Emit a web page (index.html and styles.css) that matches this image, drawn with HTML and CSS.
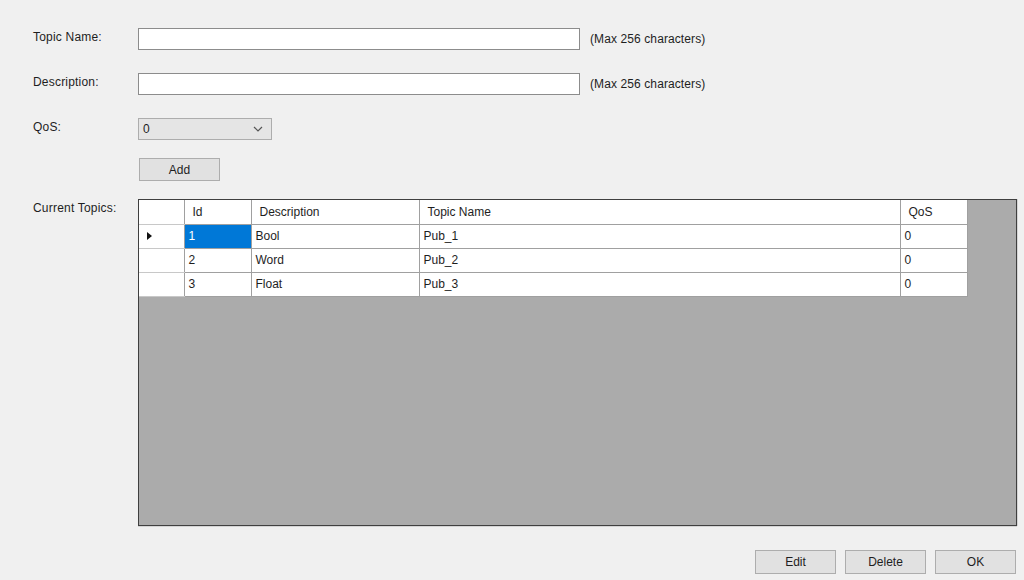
FILE: index.html
```html
<!DOCTYPE html>
<html lang="en">
<head>
    <meta charset="UTF-8">
    <meta name="viewport" content="width=device-width, initial-scale=1.0">
    <title>Topics</title>
    <link rel="stylesheet" href="styles.css">
</head>
<body>
    <div class="form">
        <div class="row row-text">
            <label class="label">Topic Name:</label>
            <input type="text" class="textbox">
            <span class="hint">(Max 256 characters)</span>
        </div>
        <div class="row row-text">
            <label class="label">Description:</label>
            <input type="text" class="textbox">
            <span class="hint">(Max 256 characters)</span>
        </div>
        <div class="row row-combo">
            <label class="label">QoS:</label>
            <div class="combo">
                <span>0</span>
                <svg class="chevron" width="10" height="6" viewBox="0 0 10 6"><path d="M1 1 L5 5 L9 1" fill="none" stroke="#555" stroke-width="1.2"/></svg>
            </div>
        </div>
        <div class="row row-add">
            <span class="label"></span>
            <button class="btn btn-add">Add</button>
        </div>
        <div class="row row-grid">
            <label class="label">Current Topics:</label>
            <div class="grid">
                <table class="topics">
                    <colgroup>
                        <col class="c-head">
                        <col class="c-id">
                        <col class="c-desc">
                        <col class="c-name">
                        <col class="c-qos">
                    </colgroup>
                    <thead>
                        <tr>
                            <th class="rowhead"></th>
                            <th>Id</th>
                            <th>Description</th>
                            <th>Topic Name</th>
                            <th>QoS</th>
                        </tr>
                    </thead>
                    <tbody>
                        <tr>
                            <td class="rowhead"><span class="arrow"></span></td>
                            <td class="selected">1</td>
                            <td>Bool</td>
                            <td>Pub_1</td>
                            <td>0</td>
                        </tr>
                        <tr>
                            <td class="rowhead"></td>
                            <td>2</td>
                            <td>Word</td>
                            <td>Pub_2</td>
                            <td>0</td>
                        </tr>
                        <tr>
                            <td class="rowhead"></td>
                            <td>3</td>
                            <td>Float</td>
                            <td>Pub_3</td>
                            <td>0</td>
                        </tr>
                    </tbody>
                </table>
            </div>
        </div>
    </div>
    <div class="actions">
        <button class="btn">Edit</button>
        <button class="btn">Delete</button>
        <button class="btn">OK</button>
    </div>
</body>
</html>
```

FILE: styles.css
```css
* {
    margin: 0;
    padding: 0;
    box-sizing: border-box;
}

body {
    font-family: "Liberation Sans", Arial, sans-serif;
    font-size: 12px;
    color: #1e1e1e;
    background-color: #f0f0f0;
    width: 1024px;
    height: 580px;
    overflow: hidden;
}

.form {
    padding: 28px 0 0 33px;
}

.row {
    display: flex;
    align-items: flex-start;
}

.label {
    width: 105px;
    flex-shrink: 0;
    padding-top: 2px;
    letter-spacing: 0.2px;
}

.row-text + .row-text {
    margin-top: 23px;
}

.row-combo {
    margin-top: 23px;
}

.row-add {
    margin-top: 18px;
}

.row-grid {
    margin-top: 18px;
}

.textbox {
    width: 442px;
    height: 22px;
    border: 1px solid #8c8c8c;
    background: #fff;
    font: inherit;
    outline: none;
}

.hint {
    margin-left: 10px;
    line-height: 22px;
    letter-spacing: 0.1px;
}

.combo {
    width: 134px;
    height: 22px;
    border: 1px solid #adadad;
    background: #e5e5e5;
    display: flex;
    align-items: center;
    justify-content: space-between;
    padding: 0 8px 0 4px;
}

.btn {
    width: 81px;
    height: 24px;
    border: 1px solid #adadad;
    background: #e1e1e1;
    font: inherit;
    color: #1e1e1e;
}

.btn-add {
    height: 23px;
    margin-left: 1px;
}

.grid {
    width: 879px;
    height: 327px;
    border: 1px solid #3f3f3f;
    box-shadow: 0 1px 0 #d4d4d4, 1px 0 0 #d4d4d4;
    background: #ababab;
}

.topics {
    border-collapse: collapse;
    table-layout: fixed;
    background: #fff;
}

.c-head { width: 45px; }
.c-id { width: 67px; }
.c-desc { width: 168px; }
.c-name { width: 481px; }
.c-qos { width: 67px; }

.topics th,
.topics td {
    height: 24px;
    border-right: 1px solid #a0a0a0;
    border-bottom: 1px solid #a0a0a0;
    text-align: left;
    font-weight: normal;
    white-space: nowrap;
    padding: 0 0 0 4px;
}

.topics th {
    padding-left: 8px;
}

.topics .rowhead {
    padding: 0;
    border-bottom-color: #c8c8c8;
}

.topics .selected {
    background: #0078d7;
    color: #fff;
}

.arrow {
    display: block;
    width: 0;
    height: 0;
    margin-left: 8px;
    border-top: 4px solid transparent;
    border-bottom: 4px solid transparent;
    border-left: 5px solid #111;
}

.actions {
    display: flex;
    justify-content: flex-end;
    gap: 9px;
    margin-top: 24px;
    padding-right: 8px;
}
```
